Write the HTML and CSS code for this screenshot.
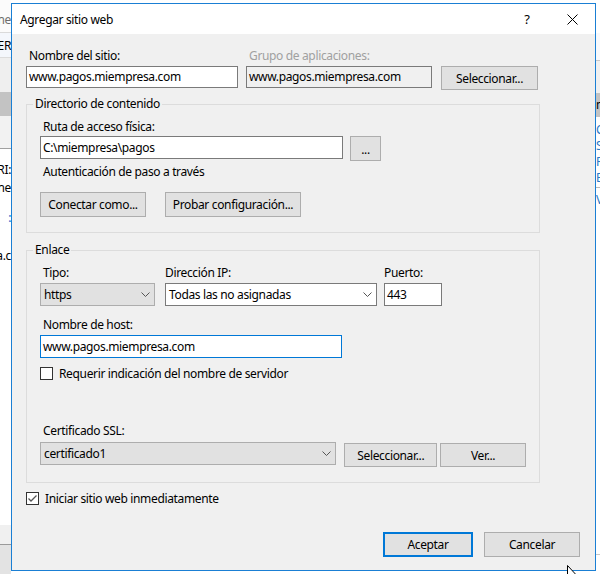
FILE: index.html
```html
<!DOCTYPE html>
<html lang="es">
<head>
<meta charset="utf-8">
<title>Agregar sitio web</title>
<link rel="stylesheet" href="styles.css">
</head>
<body>
<div class="app">
  <div class="side side-left">
    <div class="l-addr"><span class="muted">Online</span></div>
    <div class="l-tab"><span>SERVER</span></div>
    <div class="l-tool"></div>
    <div class="l-sel"></div>
    <div class="l-tool2"></div>
    <div class="l-list">
      <div class="l-line l1"><span>SERVIDORI:</span></div>
      <div class="l-line l2"><span>Online</span></div>
      <div class="l-line l3 link"><span>:</span></div>
      <div class="l-line l4"><span>www.pagos.miempresa.c</span></div>
    </div>
    <div class="l-foot1"></div>
    <div class="l-foot2"></div>
  </div>
  <div class="mid"></div>
  <div class="side side-right">
    <div class="r-top"></div>
    <div class="r-tab"></div>
    <div class="r-tool"></div>
    <div class="r-sel"><span>mi</span></div>
    <div class="r-links">
      <span>Cambiar</span>
      <span>Sitios</span>
      <span>Reiniciar</span>
      <span>Examinar</span>
    </div>
    <div class="r-links2"><span>Ver</span></div>
    <div class="r-rest"></div>
    <div class="r-foot"></div>
  </div>
</div>

<div class="dialog">
  <div class="titlebar">
    <span class="title">Agregar sitio web</span>
    <span class="help">?</span>
    <span class="close"><svg width="11" height="11" viewBox="0 0 11 11"><path d="M0.5 0.5 L10.5 10.5 M10.5 0.5 L0.5 10.5" stroke="#000" stroke-width="1" fill="none"/></svg></span>
  </div>
  <div class="body">
    <div class="row1">
      <div class="col-name">
        <label class="lbl pad">Nombre del sitio:</label>
        <div class="input">www.pagos.miempresa.com</div>
      </div>
      <div class="col-pool">
        <label class="lbl pad disabled">Grupo de aplicaciones:</label>
        <div class="input ro">www.pagos.miempresa.com</div>
      </div>
      <button class="btn btn-sel1">Seleccionar...</button>
    </div>

    <fieldset class="group g1">
      <legend>Directorio de contenido</legend>
      <label class="lbl pad">Ruta de acceso física:</label>
      <div class="path-row">
        <div class="input h23 w-path">C:\miempresa\pagos</div>
        <button class="btn btn-dots">...</button>
      </div>
      <div class="lbl pad auth">Autenticación de paso a través</div>
      <div class="btn-row">
        <button class="btn w-con">Conectar como...</button>
        <button class="btn w-test">Probar configuración...</button>
      </div>
    </fieldset>

    <fieldset class="group g2">
      <legend>Enlace</legend>
      <div class="bind-row">
        <div class="col-type">
          <label class="lbl pad">Tipo:</label>
          <div class="sel"><span>https</span><svg class="chev" width="9" height="5" viewBox="0 0 9 5"><polyline points="0.5,0.5 4.5,4.5 8.5,0.5" fill="none" stroke="#555" stroke-width="1"/></svg></div>
        </div>
        <div class="col-ip">
          <label class="lbl">Dirección IP:</label>
          <div class="sel white"><span>Todas las no asignadas</span><svg class="chev" width="9" height="5" viewBox="0 0 9 5"><polyline points="0.5,0.5 4.5,4.5 8.5,0.5" fill="none" stroke="#555" stroke-width="1"/></svg></div>
        </div>
        <div class="col-port">
          <label class="lbl">Puerto:</label>
          <div class="input h23">443</div>
        </div>
      </div>
      <label class="lbl pad host-lbl">Nombre de host:</label>
      <div class="input h23 focus w-host">www.pagos.miempresa.com</div>
      <div class="check-row sni">
        <span class="cb"></span>
        <span>Requerir indicación del nombre de servidor</span>
      </div>
      <label class="lbl pad ssl-lbl">Certificado SSL:</label>
      <div class="ssl-row">
        <div class="sel w-ssl"><span>certificado1</span><svg class="chev" width="9" height="5" viewBox="0 0 9 5"><polyline points="0.5,0.5 4.5,4.5 8.5,0.5" fill="none" stroke="#555" stroke-width="1"/></svg></div>
        <button class="btn w-sel2">Seleccionar...</button>
        <button class="btn w-ver">Ver...</button>
      </div>
    </fieldset>

    <div class="check-row start">
      <span class="cb"><svg width="11" height="11" viewBox="0 0 11 11"><polyline points="1.5,5.5 4,8 9.5,2.5" fill="none" stroke="#555" stroke-width="1.3"/></svg></span>
      <span>Iniciar sitio web inmediatamente</span>
    </div>

    <div class="actions">
      <button class="btn w-ok default">Aceptar</button>
      <button class="btn w-cancel">Cancelar</button>
    </div>
  </div>
</div>

<svg class="cursor" width="13" height="20" viewBox="0 0 13 20"><path d="M0.5 0.5 L0.5 16 L4 12.5 L6.5 18.5 L8.5 17.5 L6 11.8 L11 11.8 Z" fill="#fff" stroke="#000" stroke-width="1"/></svg>
</body>
</html>
```

FILE: styles.css
```css
* { box-sizing: border-box; }
html, body { margin: 0; padding: 0; }
body {
  width: 600px;
  height: 574px;
  overflow: hidden;
  position: relative;
  background: #fff;
  color: #000;
  font-family: "Noto Sans", "DejaVu Sans", sans-serif;
  font-size: 12px;
  letter-spacing: -0.35px;
}

/* background application (IIS manager) */
.app { display: flex; width: 600px; height: 574px; }
.side { display: flex; flex-direction: column; overflow: hidden; }
.side-left { width: 11px; }
.mid { flex: 1; background: #fff; }
.side-right { width: 4px; }

.side-left > div, .l-line { display: flex; justify-content: flex-end; align-items: center; overflow: hidden; white-space: nowrap; }
.l-addr { height: 33px; background: #fbfbfb; border-bottom: 1px solid #dadada; padding-top: 6px; }
.muted { color: #6d6d6d; }
.l-tab { height: 24px; background: #f4f7fc; }
.l-tool { height: 35px; background: #efefef; border-top: 1px solid #dcdcdc; }
.l-sel { height: 24px; background: #c3c3c3; }
.l-tool2 { height: 33px; background: #f2f2f2; border-bottom: 1px solid #a0a0a0; }
.side-left .l-list { flex: 1; background: #fff; flex-direction: column; align-items: stretch; justify-content: flex-start; }
.l-line { height: 16px; }
.l1 { margin-top: 12px; }
.l2 { margin-top: 2px; }
.l3 { margin-top: 14px; }
.l4 { margin-top: 22px; }
.link { color: #0066cc; }
.l-foot1 { height: 20px; background: #f0f0f0; border-bottom: 1px solid #9a9a9a; }
.l-foot2 { height: 29px; background: #e3e3e3; }

.side-right > div { white-space: nowrap; overflow: hidden; }
.r-top { height: 33px; background: #fff; }
.r-tab { height: 28px; background: #f7f9fc; border-bottom: 1px solid #c8c8c8; }
.r-tool { height: 32px; background: #f0f0f0; }
.r-sel { height: 24px; background: #c3c3c3; line-height: 24px; }
.r-links { display: flex; flex-direction: column; padding-top: 5px; height: 71px; color: #2b78c5; line-height: 16px; border-bottom: 1px solid #b9b9b9; }
.r-links2 { height: 24px; color: #2b78c5; line-height: 24px; }
.r-rest { flex: 1; background: #fff; border-bottom: 1px solid #c8c8c8; }
.r-foot { height: 19px; background: #fff; }

/* dialog window */
.dialog {
  position: absolute;
  left: 11px;
  top: 3px;
  width: 585px;
  height: 568px;
  border: 1px solid #1a7fd4;
  background: #f0f0f0;
  display: flex;
  flex-direction: column;
}
.titlebar {
  height: 30px;
  background: #fff;
  display: flex;
  align-items: center;
  padding: 0 17px 0 8px;
  flex: none;
}
.title { flex: 1; }
.help { width: 10px; text-align: center; font-size: 13px; margin-right: 35px; }
.close { width: 11px; height: 11px; display: flex; }

.body { flex: 1; padding: 14px 15px 0 14px; }

.lbl { display: block; height: 16px; line-height: 16px; white-space: nowrap; }
.lbl.pad { padding-left: 3px; }
.lbl.disabled { color: #a0a0a0; }
.lbl + .input, .lbl + .sel { margin-top: 2px; }

.input {
  height: 22px;
  border: 1px solid #7a7a7a;
  background: #fff;
  padding: 0 2px;
  line-height: 20px;
  white-space: nowrap;
  overflow: hidden;
}
.input.ro { background: #f0f0f0; }
.input.h23 { height: 23px; line-height: 21px; }
.input.focus { border-color: #0078d7; }

.btn {
  height: 25px;
  border: 1px solid #adadad;
  background: #e1e1e1;
  color: #000;
  font: inherit;
  letter-spacing: inherit;
  padding: 0;
  margin: 0;
  display: flex;
  align-items: center;
  justify-content: center;
}
.btn.default { border: 2px solid #0078d7; }

.row1 { display: flex; align-items: flex-start; }
.col-name { width: 212px; }
.col-pool { width: 186px; margin-left: 8px; }
.btn-sel1 { width: 97px; height: 24px; margin-left: 9px; margin-top: 18px; }

.group {
  margin: 0;
  width: 514px;
  min-width: 0;
  border: 1px solid #dcdcdc;
  padding: 7px 13px 15px 13px;
}
.group legend {
  margin-left: -7px;
  padding: 0 2px;
  height: 16px;
  line-height: 16px;
}
.g1 { margin-top: 6px; }
.g2 { margin-top: 9px; }

.path-row { display: flex; align-items: flex-start; margin-top: 1px; }
.w-path { width: 303px; }
.btn-dots { width: 31px; margin-left: 7px; padding-top: 2px; }
.auth { margin-top: 3px; }
.btn-row { display: flex; gap: 19px; margin-top: 12px; }
.w-con { width: 106px; }
.w-test { width: 136px; }

.bind-row { display: flex; align-items: flex-start; }
.col-type { width: 115px; }
.col-ip { width: 212px; margin-left: 10px; }
.col-port { width: 58px; margin-left: 7px; }

.sel {
  height: 23px;
  border: 1px solid #adadad;
  background: #e1e1e1;
  display: flex;
  align-items: center;
  justify-content: space-between;
  padding: 0 4px 0 3px;
  white-space: nowrap;
}
.sel.white { background: #fff; border-color: #7a7a7a; }
.chev { flex: none; }

.host-lbl { margin-top: 11px; }
.w-host { width: 302px; margin-top: 2px; }

.check-row { display: flex; align-items: center; height: 16px; gap: 6px; white-space: nowrap; }
.cb {
  width: 13px;
  height: 13px;
  border: 1px solid #333;
  background: #fff;
  display: flex;
  align-items: center;
  justify-content: center;
  flex: none;
}
.sni { margin-top: 7px; }
.ssl-lbl { margin-top: 42px; }
.ssl-row { display: flex; align-items: flex-start; margin-top: 3px; }
.w-ssl { width: 297px; }
.w-sel2 { width: 93px; height: 24px; margin-left: 8px; margin-top: 1px; }
.w-ver { width: 86px; height: 24px; margin-left: 3px; margin-top: 1px; }

.start { margin-top: 7px; }
.actions { display: flex; justify-content: flex-end; gap: 11px; margin-top: 26px; }
.w-ok { width: 90px; }
.w-cancel { width: 96px; }

.cursor { position: absolute; left: 567px; top: 565px; }
```
